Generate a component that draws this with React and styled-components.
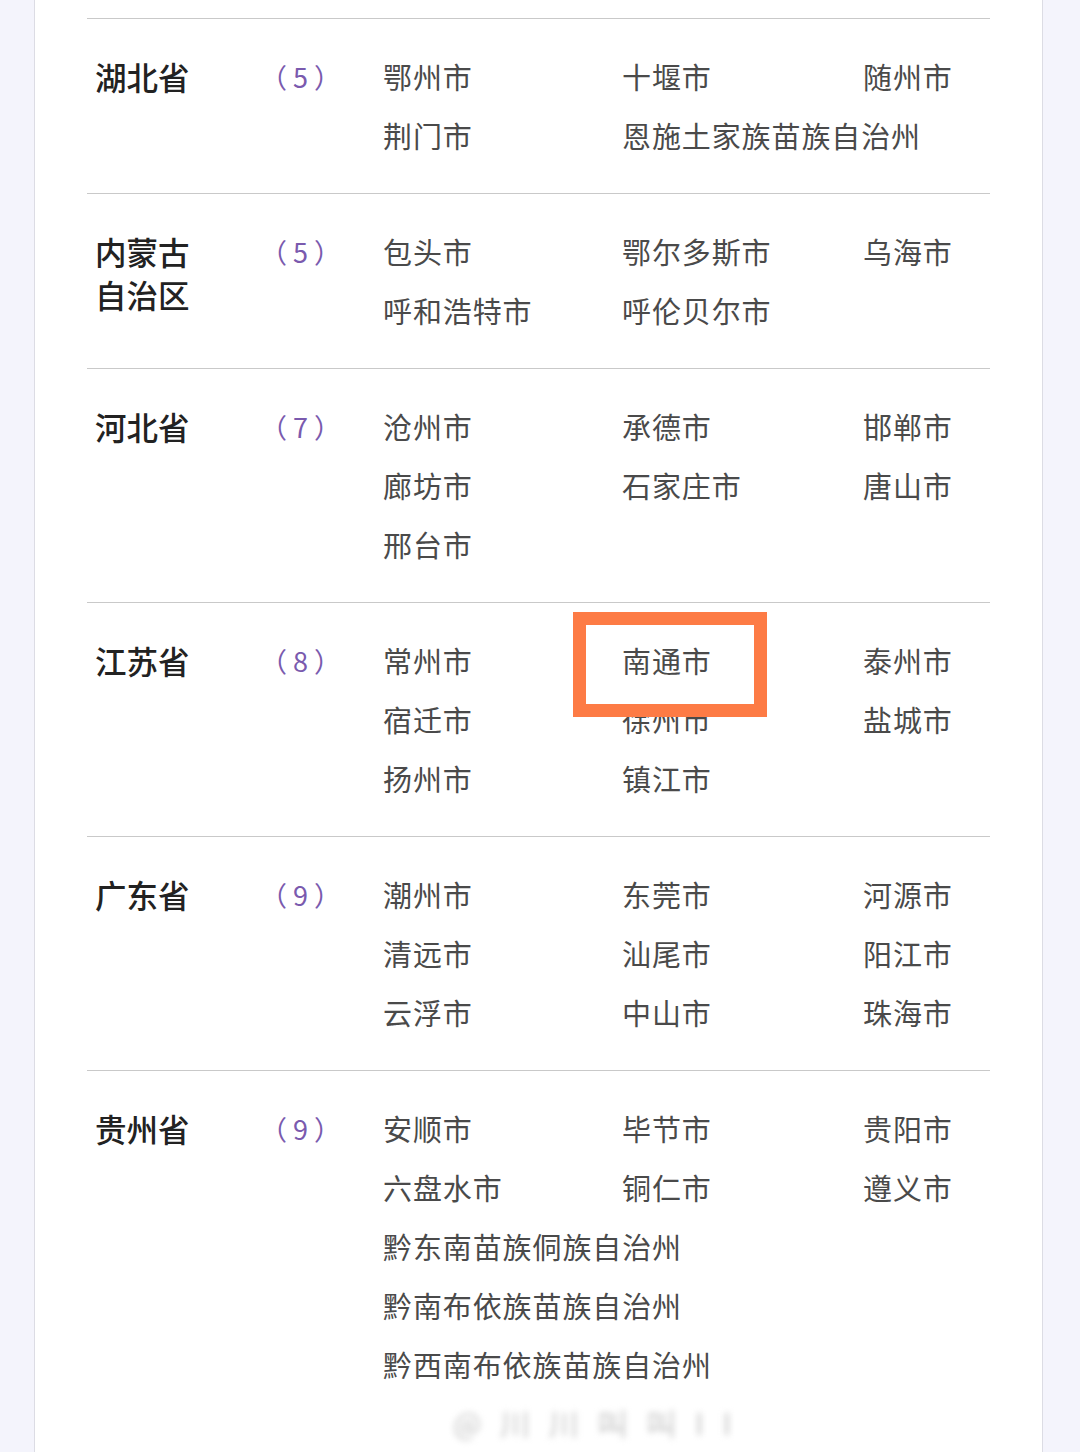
import React from "react";
import styled, { createGlobalStyle } from "styled-components";

const GlobalStyle = createGlobalStyle`
  html, body {
    margin: 0;
    padding: 0;
    background: #f4f4fc;
  }
  body {
    font-family: "Noto Sans CJK SC", "Noto Sans", sans-serif;
  }
`;

const provinces = [
  {
    name: "湖北省",
    count: 5,
    cities: ["鄂州市", "十堰市", "随州市", "荆门市", { name: "恩施土家族苗族自治州", span: 2 }],
  },
  {
    name: "内蒙古自治区",
    count: 5,
    cities: ["包头市", "鄂尔多斯市", "乌海市", "呼和浩特市", "呼伦贝尔市"],
  },
  {
    name: "河北省",
    count: 7,
    cities: ["沧州市", "承德市", "邯郸市", "廊坊市", "石家庄市", "唐山市", "邢台市"],
  },
  {
    name: "江苏省",
    count: 8,
    cities: ["常州市", { name: "南通市", marked: true }, "泰州市", "宿迁市", "徐州市", "盐城市", "扬州市", "镇江市"],
  },
  {
    name: "广东省",
    count: 9,
    cities: ["潮州市", "东莞市", "河源市", "清远市", "汕尾市", "阳江市", "云浮市", "中山市", "珠海市"],
  },
  {
    name: "贵州省",
    count: 9,
    cities: [
      "安顺市",
      "毕节市",
      "贵阳市",
      "六盘水市",
      "铜仁市",
      "遵义市",
      { name: "黔东南苗族侗族自治州", span: 3 },
      { name: "黔南布依族苗族自治州", span: 3 },
      { name: "黔西南布依族苗族自治州", span: 3 },
    ],
  },
];

const Page = styled.div`
  min-height: 1452px;
  padding: 0 37px 0 34px;
  overflow: hidden;
`;

const Card = styled.div`
  position: relative;
  background: #fff;
  border-left: 1px solid #dcdce4;
  border-right: 1px solid #dcdce4;
  min-height: 1452px;
  padding: 18px 52px 0 52px;
  box-sizing: border-box;
`;

const Row = styled.div`
  display: grid;
  grid-template-columns: 167px 121px 1fr;
  padding: 28px 0 28px 8px;
  border-top: 1px solid #c9c9c9;
  &:last-of-type {
    border-bottom: 1px solid #c9c9c9;
  }
`;

const Name = styled.div`
  margin-top: 8px;
  max-width: 100px;
  font-size: 31.5px;
  line-height: 43px;
  font-weight: 500;
  color: #222;
`;

const Count = styled.div`
  font-size: 27px;
  line-height: 59px;
  color: #7a5aae;
  letter-spacing: 6px;
  margin-left: -2px;
`;

const Cities = styled.div`
  display: grid;
  grid-template-columns: 239px 241px 1fr;
`;

const City = styled.div`
  position: relative;
  grid-column: span ${(p) => p.$span || 1};
  font-size: 29px;
  line-height: 59px;
  color: #4a4a4a;
  white-space: nowrap;
  letter-spacing: 0.9px;
`;

const Highlight = styled.div`
  position: absolute;
  left: -49px;
  top: -19px;
  width: 194px;
  height: 105px;
  box-sizing: border-box;
  border: 13px solid #fd7b45;
  z-index: 2;
`;

const Watermark = styled.div`
  position: absolute;
  left: 418px;
  top: 1400px;
  font-size: 30px;
  color: #c4c4c4;
  filter: blur(3px);
  letter-spacing: 6px;
`;

const App = () => (
  <Page>
    <GlobalStyle />
    <Card>
      {provinces.map((p) => (
        <Row key={p.name}>
          <Name>{p.name}</Name>
          <Count>（{p.count}）</Count>
          <Cities>
            {p.cities.map((c) => {
              const city = typeof c === "string" ? { name: c } : c;
              return (
                <City key={city.name} $span={city.span}>
                  {city.name}
                  {city.marked && <Highlight />}
                </City>
              );
            })}
          </Cities>
        </Row>
      ))}
      <Watermark>@ 川 川 叫 叫 I I</Watermark>
    </Card>
  </Page>
);

export default App;
